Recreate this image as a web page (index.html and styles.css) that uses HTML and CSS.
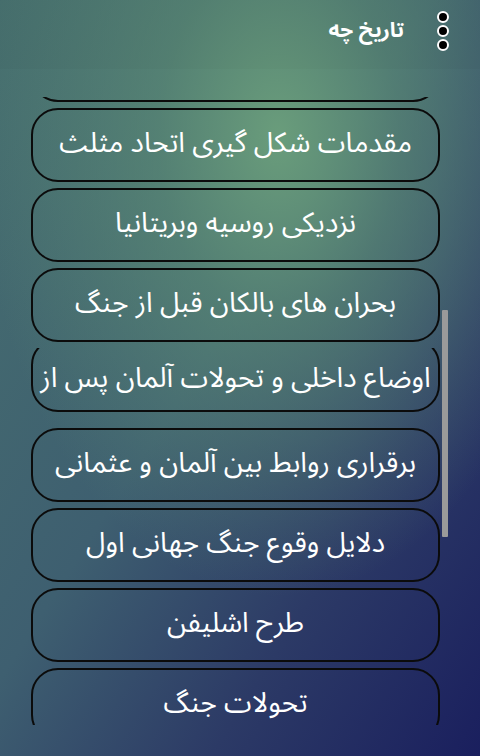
FILE: index.html
```html
<!DOCTYPE html>
<html lang="fa" dir="rtl">
<head>
<meta charset="utf-8">
<title>تاریخ چه</title>
<link rel="stylesheet" href="styles.css">
</head>
<body>
<div class="app">
  <header class="toolbar">
    <div class="dots" aria-label="menu">
      <span class="dot"></span>
      <span class="dot"></span>
      <span class="dot"></span>
    </div>
    <h1 class="title">تاریخ چه</h1>
  </header>
  <main class="list-view">
    <div class="list">
      <div class="item">مقدمه</div>
      <div class="item">مقدمات شکل گیری اتحاد مثلث</div>
      <div class="item">نزدیکی روسیه وبریتانیا</div>
      <div class="item">بحران های بالکان قبل از جنگ</div>
      <div class="clip-row">
        <div class="item item-shifted"><span class="nowrap">اوضاع داخلی و تحولات آلمان پس از</span></div>
      </div>
      <div class="item">برقراری روابط بین آلمان و عثمانی</div>
      <div class="item">دلایل وقوع جنگ جهانی اول</div>
      <div class="item">طرح اشلیفن</div>
      <div class="item">تحولات جنگ</div>
      <div class="item">پایان جنگ</div>
    </div>
    <div class="scrollbar"></div>
  </main>
</div>
</body>
</html>
```
FILE: styles.css
```css
html, body {
  margin: 0;
  padding: 0;
}
body {
  width: 480px;
  height: 756px;
  overflow: hidden;
  font-family: "Noto Sans Arabic", "Noto Sans Arabic UI", "DejaVu Sans", sans-serif;
  color: #fff;
  background:
    radial-gradient(ellipse 300px 460px at 58% 18%, rgba(108, 160, 124, 0.95) 0%, rgba(96, 146, 118, 0.6) 40%, rgba(80, 120, 115, 0) 100%),
    linear-gradient(to bottom right, #47706f 0%, #3e5f70 45%, #2c3a66 72%, #1a1f5e 100%);
}
.app {
  display: flex;
  flex-direction: column;
  height: 756px;
}
.toolbar {
  height: 69px;
  flex: none;
  display: flex;
  align-items: center;
  padding-right: 31px;
  gap: 33px;
  background: rgba(0, 0, 0, 0.02);
}
.title {
  margin: 0;
  font-size: 21px;
  font-weight: bold;
  line-height: 1;
  padding-bottom: 8px;
}
.dots {
  display: flex;
  flex-direction: column;
  gap: 2px;
  padding-bottom: 7px;
}
.dot {
  width: 8px;
  height: 8px;
  border-radius: 50%;
  background: #000;
  border: 2px solid #fff;
}
.list-view {
  position: relative;
  margin-top: 28px;
  height: 628px;
  overflow: hidden;
}
.list {
  margin-top: -69px;
  display: flex;
  flex-direction: column;
  gap: 6px;
  padding-right: 40px;
  padding-left: 31px;
}
.item {
  box-sizing: border-box;
  height: 74px;
  flex: none;
  border: 2px solid #0b0b0b;
  border-radius: 27px;
  display: flex;
  align-items: center;
  justify-content: center;
  font-size: 28px;
  line-height: 1;
  padding-bottom: 2px;
  white-space: nowrap;
  overflow: hidden;
}
.clip-row {
  height: 64px;
  flex: none;
  margin-bottom: 10px;
  overflow: hidden;
}
.item-shifted {
  margin-top: -10px;
  padding-top: 10px;
}
.nowrap {
  white-space: nowrap;
}
.scrollbar {
  position: absolute;
  top: 213px;
  right: 32px;
  width: 6px;
  height: 227px;
  background: #9a9a9a;
  border-radius: 1px;
}
```
